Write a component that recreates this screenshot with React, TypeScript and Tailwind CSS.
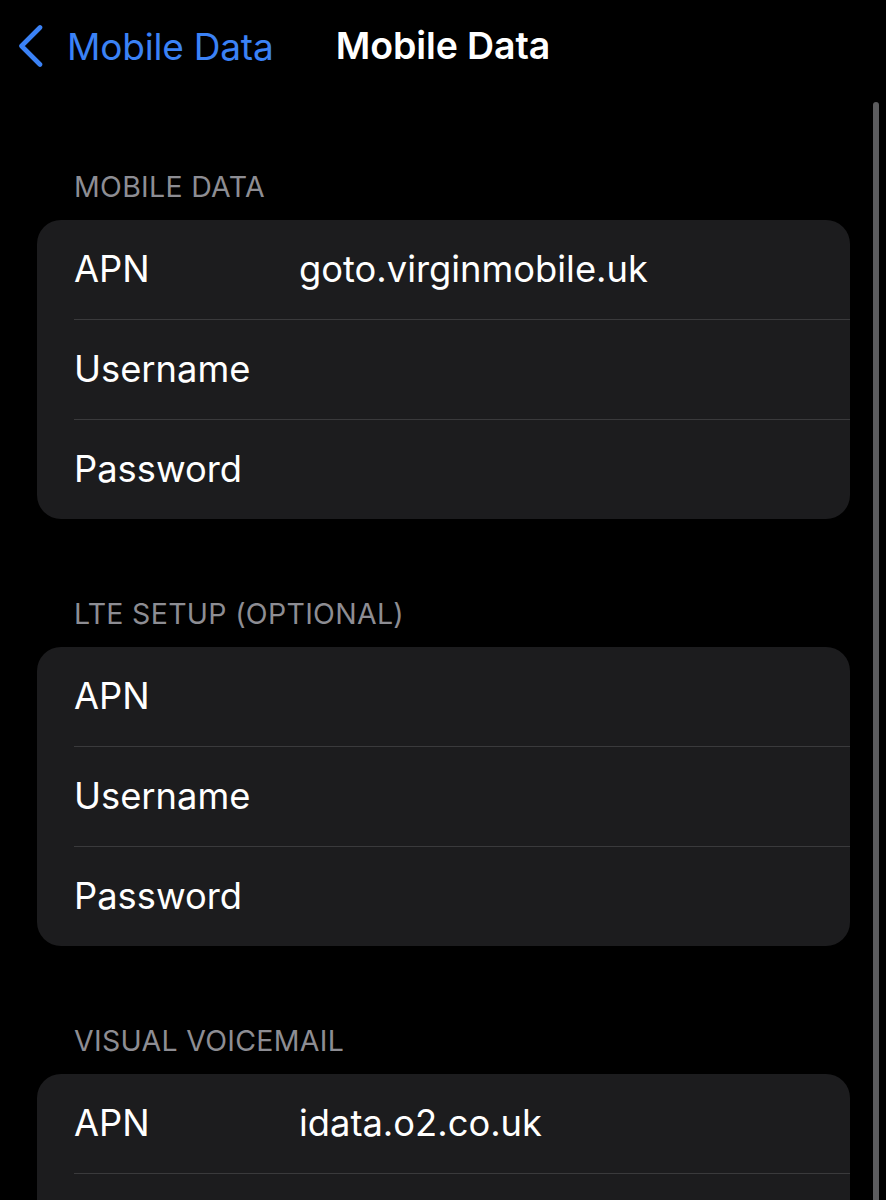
interface Row {
  label: string
  value?: string
}

interface Section {
  title: string
  rows: Row[]
}

const sections: Section[] = [
  {
    title: 'MOBILE DATA',
    rows: [{ label: 'APN', value: 'goto.virginmobile.uk' }, { label: 'Username' }, { label: 'Password' }],
  },
  {
    title: 'LTE SETUP (OPTIONAL)',
    rows: [{ label: 'APN' }, { label: 'Username' }, { label: 'Password' }],
  },
  {
    title: 'VISUAL VOICEMAIL',
    // rest of this card scrolls below the fold
    rows: [{ label: 'APN', value: 'idata.o2.co.uk' }, { label: '' }],
  },
]

export default function App() {
  return (
    <div
      className="relative w-[886px] h-[1200px] overflow-hidden bg-black text-white"
      style={{ fontFamily: 'Inter, "Noto Sans", sans-serif' }}
    >
      {/* Nav bar */}
      <div className="grid grid-cols-[1fr_auto_1fr] items-center h-[92px]">
        <div className="flex items-center pl-[19px] text-[#3b82f6]">
          <svg width="24" height="42" viewBox="0 0 24 42" fill="none" className="mr-[24px]">
            <polyline
              points="21,2.5 2.5,21 21,39.5"
              stroke="currentColor"
              strokeWidth="4.6"
              strokeLinecap="round"
              strokeLinejoin="round"
            />
          </svg>
          <span className="text-[37px] leading-none tracking-[-0.2px]">Mobile Data</span>
        </div>
        <div className="text-[37.5px] leading-none font-semibold tracking-[-0.1px]">Mobile Data</div>
        <div />
      </div>

      {/* Sections */}
      <div className="flex flex-col pl-[37px] pr-[36px]">
        {sections.map((s) => (
          <div key={s.title} className="mt-[78px] flex flex-col">
            <div className="h-[34px] mb-[16px] pl-[37px] flex items-center text-[28.5px] text-[#8d8d93] tracking-[0.3px]">
              {s.title}
            </div>
            <div className="rounded-[24px] bg-[#1c1c1e] flex flex-col">
              {s.rows.map((r, i) => (
                <div key={i} className="flex flex-col">
                  {i > 0 && <div className="h-px ml-[37px] bg-[#3a3a3c]" />}
                  <div className="h-[99px] flex items-center pl-[37px] text-[36.3px]">
                    <span className="w-[225px]">{r.label}</span>
                    {r.value && <span>{r.value}</span>}
                  </div>
                </div>
              ))}
            </div>
          </div>
        ))}
      </div>

      {/* Scroll indicator */}
      <div className="absolute right-[7px] top-[102px] w-[6px] h-[1120px] rounded-full bg-[#5c5c5e]" />
    </div>
  )
}
